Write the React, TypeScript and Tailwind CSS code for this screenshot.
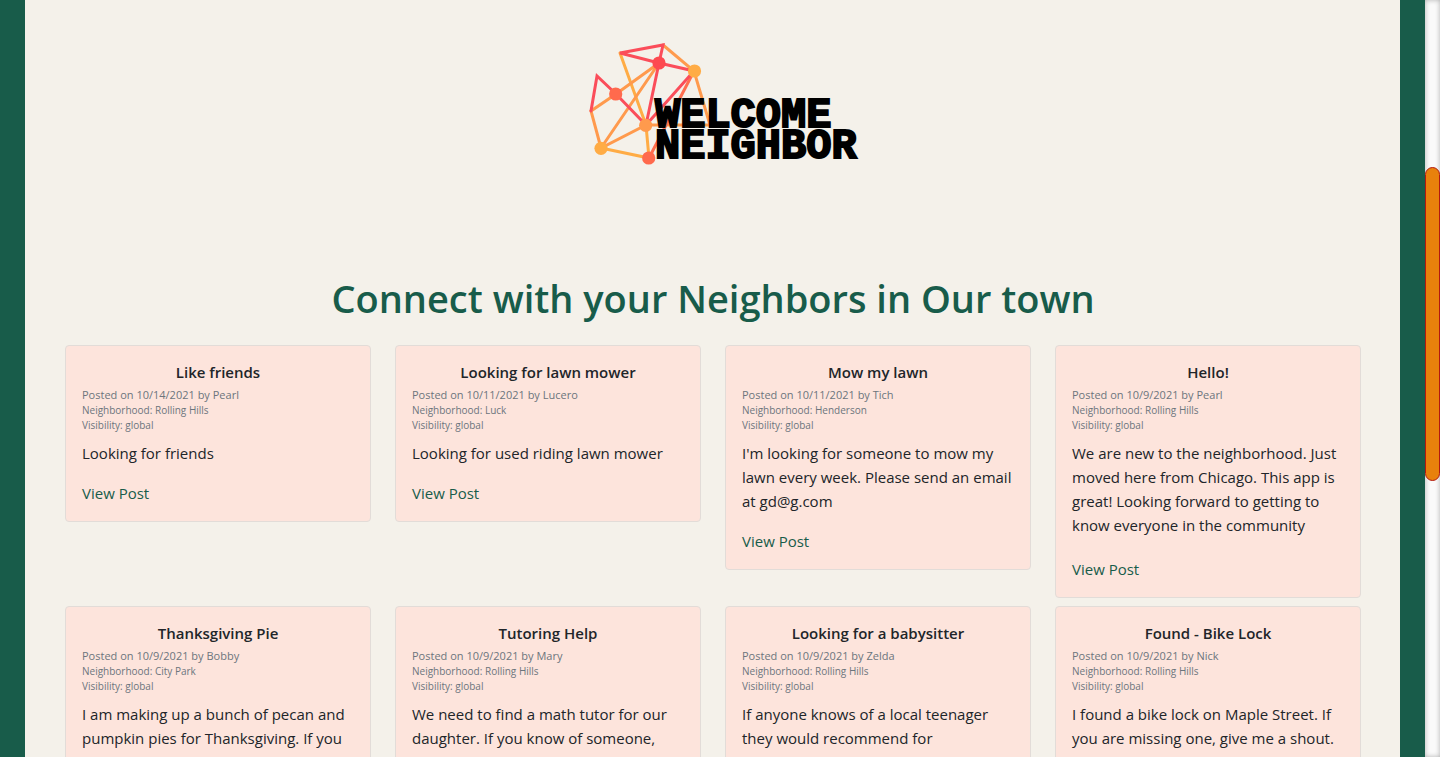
type Post = {
  title: string;
  date: string;
  author: string;
  neighborhood: string;
  body: string;
};

const rows: Post[][] = [
  [
    { title: "Like friends", date: "10/14/2021", author: "Pearl", neighborhood: "Rolling Hills", body: "Looking for friends" },
    { title: "Looking for lawn mower", date: "10/11/2021", author: "Lucero", neighborhood: "Luck", body: "Looking for used riding lawn mower" },
    { title: "Mow my lawn", date: "10/11/2021", author: "Tich", neighborhood: "Henderson", body: "I'm looking for someone to mow my lawn every week. Please send an email at gd@g.com" },
    { title: "Hello!", date: "10/9/2021", author: "Pearl", neighborhood: "Rolling Hills", body: "We are new to the neighborhood. Just moved here from Chicago. This app is great! Looking forward to getting to know everyone in the community" },
  ],
  [
    { title: "Thanksgiving Pie", date: "10/9/2021", author: "Bobby", neighborhood: "City Park", body: "I am making up a bunch of pecan and pumpkin pies for Thanksgiving. If you would like one, please order and I will" },
    { title: "Tutoring Help", date: "10/9/2021", author: "Mary", neighborhood: "Rolling Hills", body: "We need to find a math tutor for our daughter. If you know of someone, send me a message" },
    { title: "Looking for a babysitter", date: "10/9/2021", author: "Zelda", neighborhood: "Rolling Hills", body: "If anyone knows of a local teenager they would recommend for babysitting, please send" },
    { title: "Found - Bike Lock", date: "10/9/2021", author: "Nick", neighborhood: "Rolling Hills", body: "I found a bike lock on Maple Street. If you are missing one, give me a shout." },
  ],
];

function Logo() {
  return (
    <svg viewBox="570 30 310 150" className="h-[150px] w-[310px]" role="img" aria-label="Welcome Neighbor">
      <g strokeWidth="3" strokeLinecap="round" fill="none">
        <path stroke="#ffac45" d="M620 53 646 125 649 158 601 148" />
        <path stroke="#ff9a4d" d="M663 45 694 71 710 125H646L601 148 591 111 616 94 659 63 601 148" />
        <path stroke="#ff6f50" d="M694 71 649 158" />
        <path stroke="#fb4d5a" d="M659 63 663 45 620 53 659 63 694 71 646 125 616 94 597 76 591 111M659 63 646 125" />
      </g>
      <circle cx="659" cy="63" r="6.6" fill="#fd4a50" />
      <circle cx="694.5" cy="71" r="6.6" fill="#ffac45" />
      <circle cx="615.7" cy="94" r="6.6" fill="#ff6a4d" />
      <circle cx="645.7" cy="125.3" r="6.6" fill="#ff9a4d" />
      <circle cx="601" cy="148.3" r="6.6" fill="#ffac45" />
      <circle cx="648.7" cy="158" r="6.6" fill="#ff6a4d" />
      <g className="font-['Liberation_Mono',monospace] text-[42px] font-bold" fill="#000" stroke="#000" strokeWidth="2">
        <text x="655" y="127">WELCOME</text>
        <text x="655" y="158">NEIGHBOR</text>
      </g>
    </svg>
  );
}

function PostCard({ post }: { post: Post }) {
  const isLong = post.body.length > 120;
  return (
    <article className="rounded border border-[#e2dcd8] bg-[#fde4dc] p-4">
      <h2 className="mb-1 text-center text-[15px] leading-5 font-semibold">{post.title}</h2>
      <p className="text-[11px] leading-[17px] text-[#6c757d]">
        Posted on {post.date} by {post.author}
      </p>
      <p className="text-[10px] leading-[15px] text-[#6c757d]">Neighborhood: {post.neighborhood}</p>
      <p className="mb-2 text-[10px] leading-[15px] text-[#6c757d]">Visibility: global</p>
      <p className={`${isLong ? "mb-5" : "mb-4"} text-[15px] leading-6`}>{post.body}</p>
      <a href="#post" className="block text-[15px] leading-6 text-[#185c4a]">View Post</a>
    </article>
  );
}

export default function App() {
  return (
    <div className="flex h-screen overflow-hidden bg-[#185c4a] font-['Open_Sans','Noto_Sans',sans-serif] text-[#212529]">
      <main className="mx-[25px] min-w-0 flex-1 bg-[#f4f1ea] pt-[30px] pr-[39px] pl-10">
        <header className="flex justify-center pl-6">
          <Logo />
        </header>
        <h1 className="mt-[94px] mb-[23px] text-center text-[38px] leading-12 font-semibold text-[#185c4a]">
          Connect with your Neighbors in Our town
        </h1>
        <div className="flex flex-col gap-2">
          {rows.map((row, i) => (
            <section key={i} className="grid grid-cols-4 items-start gap-6">
              {row.map((post) => (
                <PostCard key={post.title} post={post} />
              ))}
            </section>
          ))}
        </div>
      </main>
      <div className="flex w-[15px] flex-col bg-[#fafafa] shadow-[inset_0_0_5px_#b0b0b0]">
        <div className="h-[22%]" />
        <div className="h-[41.6%] rounded-[10px] border border-[#b3190f] bg-[#e8810c]" />
      </div>
    </div>
  );
}
